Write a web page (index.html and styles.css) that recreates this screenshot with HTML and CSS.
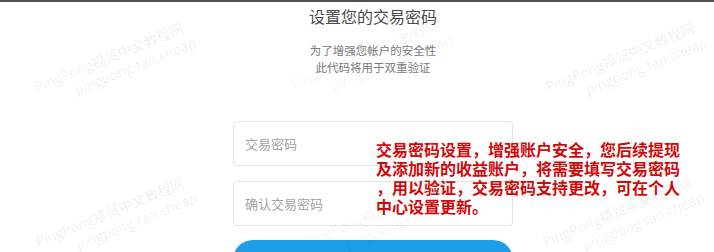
FILE: index.html
```html
<!DOCTYPE html>
<html lang="zh-CN">
<head>
<meta charset="utf-8">
<title>设置您的交易密码</title>
<link rel="stylesheet" href="styles.css">
</head>
<body>
<div class="page">
  <div class="topline"></div>
  <main class="content">
    <h1 class="title">设置您的交易密码</h1>
    <p class="subtitle">为了增强您帐户的安全性<br>此代码将用于双重验证</p>
    <form class="form">
      <input class="field" type="password" placeholder="交易密码">
      <input class="field" type="password" placeholder="确认交易密码">
      <button class="submit" type="button"></button>
    </form>
  </main>
  <div class="note">交易密码设置，增强账户安全，您后续提现<br>及添加新的收益账户，将需要填写交易密码<br>，用以验证，交易密码支持更改，可在个人<br>中心设置更新。</div>
  <div class="wm wm-a"><span>PingPong福贸中文教程网</span><span class="l2">pingpong.tao.cheap</span></div>
  <div class="wm wm-b"><span>PingPong福贸中文教程网</span><span class="l2">pingpong.tao.cheap</span></div>
  <div class="wm wm-c"><span>PingPong福贸中文教程网</span><span class="l2">pingpong.tao.cheap</span></div>
  <div class="wm wm-d"><span>PingPong福贸中文教程网</span><span class="l2">pingpong.tao.cheap</span></div>
  <div class="wm wm-e"><span>PingPong福贸中文教程网</span><span class="l2">pingpong.tao.cheap</span></div>
  <div class="wm wm-f"><span>PingPong福贸中文教程网</span><span class="l2">pingpong.tao.cheap</span></div>
</div>
</body>
</html>
```
FILE: styles.css
```css
* { box-sizing: border-box; }
html, body { margin: 0; padding: 0; background: #fff; }
body {
  font-family: "Noto Sans CJK SC", "Noto Sans", sans-serif;
  width: 714px;
  height: 252px;
  overflow: hidden;
}
.page {
  position: relative;
  width: 714px;
  height: 252px;
  overflow: hidden;
}
.topline {
  height: 2px;
  background: #505050;
}
.content {
  display: flex;
  flex-direction: column;
  align-items: center;
  padding-left: 32px;
}
.title {
  margin: 4px 0 0;
  font-size: 16px;
  line-height: 20px;
  font-weight: 400;
  color: #4a4a4a;
}
.subtitle {
  margin: 16px 0 0;
  font-size: 11.5px;
  line-height: 17px;
  color: #7a7a7a;
  text-align: center;
}
.form {
  margin-top: 45px;
  display: flex;
  flex-direction: column;
  gap: 15px;
  width: 280px;
}
.field {
  width: 280px;
  height: 45px;
  border: 1px solid #e4e4e4;
  border-radius: 4px;
  padding: 0 11px;
  font-family: inherit;
  font-size: 13px;
  color: #333;
  background: #fff;
  outline: none;
}
.field::placeholder { color: #a3a3a3; }
.submit {
  margin-top: -1px;
  width: 280px;
  height: 45px;
  border: 0;
  border-radius: 20px;
  background: #1f9ee8;
}
.note {
  position: absolute;
  left: 376px;
  top: 140px;
  font-size: 16px;
  line-height: 19px;
  font-weight: 700;
  color: #d00a0a;
  white-space: nowrap;
}
.wm {
  position: absolute;
  display: flex;
  flex-direction: column;
  font-family: "Open Sans", "Noto Sans CJK SC", sans-serif;
  font-size: 14px;
  line-height: 18px;
  color: rgba(0, 0, 0, 0.075);
  white-space: nowrap;
  transform: rotate(-22deg);
  transform-origin: 0 0;
  pointer-events: none;
}
.wm .l2 { padding-left: 36px; }
.wm-a { left: 32px; top: 79px; }
.wm-b { left: 288px; top: 76px; color: rgba(0, 0, 0, 0.05); }
.wm-c { left: 543px; top: 79px; }
.wm-d { left: 33px; top: 234px; }
.wm-e { left: 302px; top: 234px; color: rgba(0, 0, 0, 0.06); }
.wm-f { left: 540px; top: 234px; }
```
